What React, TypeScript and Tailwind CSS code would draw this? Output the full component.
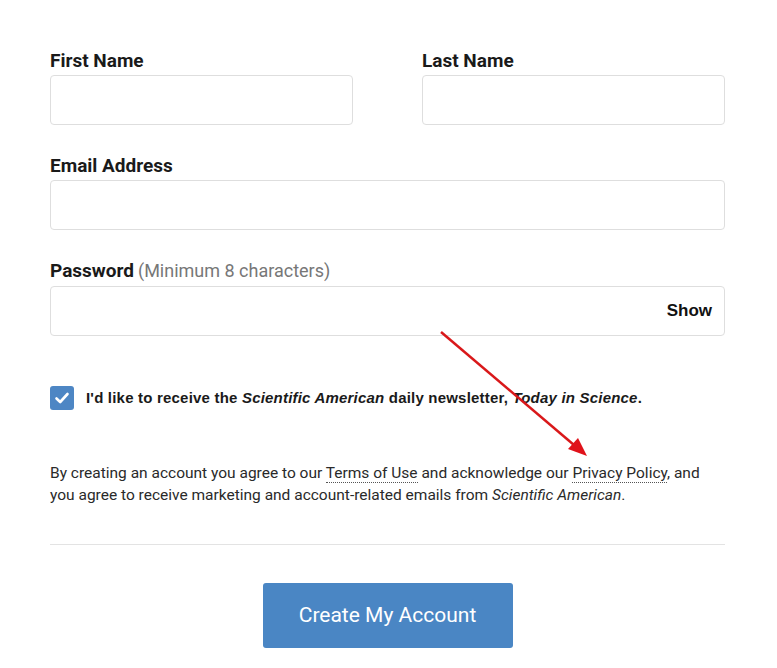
import { useState } from 'react';

export default function App() {
  const [checked, setChecked] = useState(true);

  return (
    <div className="relative w-[777px] h-[668px] bg-white overflow-hidden font-['Roboto',_'Liberation_Sans',_sans-serif] text-[#222]">
      <form className="flex flex-col pl-[50px] pr-[52px] pt-[48px]" onSubmit={e => e.preventDefault()}>
        {/* Name row */}
        <div className="flex gap-[69px]">
          <label className="flex flex-col w-[304px]">
            <span className="text-[19px] font-bold leading-[26px] mb-[1px] text-[#1a1a1a]">First Name</span>
            <input className="h-[50px] rounded-[4px] border border-[#dedede] px-3 outline-none" />
          </label>
          <label className="flex flex-col w-[304px]">
            <span className="text-[19px] font-bold leading-[26px] mb-[1px] text-[#1a1a1a]">Last Name</span>
            <input className="h-[50px] rounded-[4px] border border-[#dedede] px-3 outline-none" />
          </label>
        </div>

        {/* Email */}
        <label className="flex flex-col mt-[28px]">
          <span className="text-[19px] font-bold leading-[26px] mb-[1px] text-[#1a1a1a]">Email Address</span>
          <input className="h-[50px] rounded-[4px] border border-[#dedede] px-3 outline-none" />
        </label>

        {/* Password */}
        <label className="flex flex-col mt-[28px]">
          <span className="leading-[26px] mb-[1px]">
            <span className="text-[19px] font-bold text-[#1a1a1a]">Password</span>{' '}
            <span className="text-[18px] text-[#777]">(Minimum 8 characters)</span>
          </span>
          <div className="flex items-center h-[50px] rounded-[4px] border border-[#dedede] pl-3 pr-[12px]">
            <input type="password" className="flex-1 h-full outline-none" />
            <span className="text-[17px] font-bold text-[#111] font-['Liberation_Sans',_Arial,_sans-serif]">Show</span>
          </div>
        </label>

        {/* Newsletter */}
        <label className="flex items-center gap-[12px] mt-[50px] cursor-pointer">
          <button
            type="button"
            onClick={() => setChecked(c => !c)}
            className={`w-[24px] h-[24px] rounded-[3px] flex items-center justify-center ${checked ? 'bg-[#4d86c4]' : 'bg-white border border-[#aaa]'}`}
          >
            {checked && (
              <svg width="16" height="16" viewBox="0 0 16 16" fill="none">
                <path d="M2.5 8.5 L6.2 12 L13.5 4" stroke="white" strokeWidth="2.6" strokeLinecap="round" strokeLinejoin="round" />
              </svg>
            )}
          </button>
          <span className="text-[15px] font-bold text-[#1a1a1a] tracking-[0.2px] font-['Liberation_Sans',_Arial,_sans-serif]">
            I'd like to receive the <em>Scientific American</em> daily newsletter, <em>Today in Science</em>.
          </span>
        </label>

        {/* Terms */}
        <p className="mt-[52px] text-[15.5px] leading-[22px] text-[#2a2a2a]">
          By creating an account you agree to our{' '}
          <a className="border-b border-dotted border-[#555]">Terms of Use</a> and acknowledge our{' '}
          <a className="border-b border-dotted border-[#555]">Privacy Policy</a>, and<br />
          you agree to receive marketing and account-related emails from <em>Scientific American</em>.
        </p>

        <div className="mt-[38px] border-t border-[#e3e3e3]" />

        <div className="flex justify-center mt-[38px]">
          <button
            type="submit"
            className="w-[250px] h-[65px] rounded-[3px] bg-[#4a86c4] text-white text-[21px]"
          >
            Create My Account
          </button>
        </div>
      </form>

      {/* Red annotation arrow */}
      <svg className="absolute left-0 top-0 pointer-events-none" width="777" height="668">
        <line x1="441" y1="332" x2="574" y2="445" stroke="#d9181a" strokeWidth="2.5" />
        <polygon points="587,456 568,449 578,438" fill="#e0121a" />
      </svg>
    </div>
  );
}
